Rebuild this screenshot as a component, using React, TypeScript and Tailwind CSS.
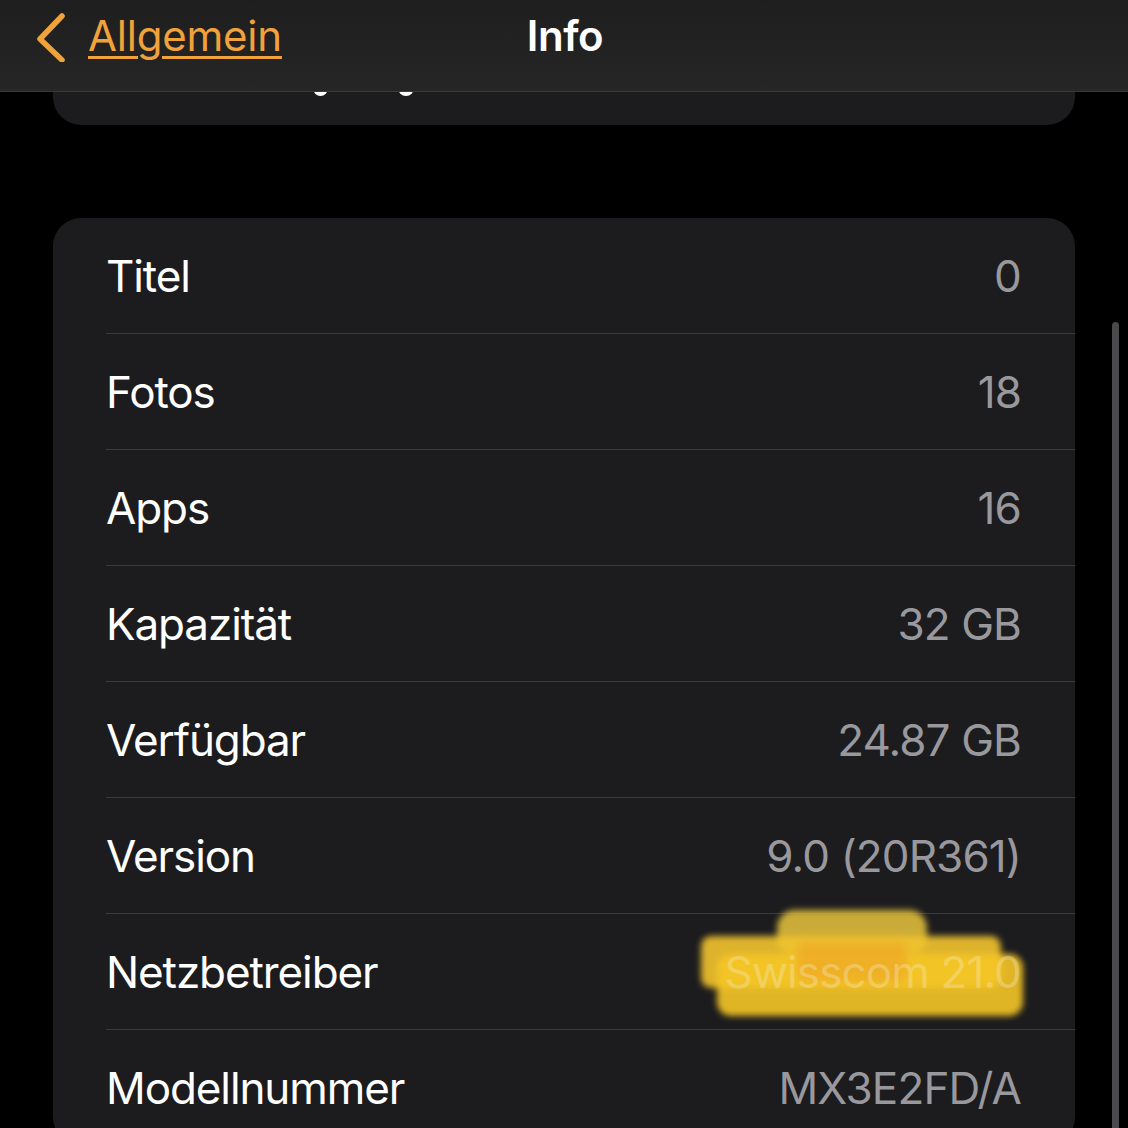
import React from 'react';

const rows: { label: string; value: string; hidden?: boolean }[] = [
  { label: 'Titel', value: '0' },
  { label: 'Fotos', value: '18' },
  { label: 'Apps', value: '16' },
  { label: 'Kapazität', value: '32 GB' },
  { label: 'Verfügbar', value: '24.87 GB' },
  { label: 'Version', value: '9.0 (20R361)' },
  { label: 'Netzbetreiber', value: 'Swisscom 21.0', hidden: true },
  { label: 'Modellnummer', value: 'MX3E2FD/A' },
];

const font = { fontFamily: 'Inter, "Noto Sans", sans-serif' };

// yellow marker scribble that hides the carrier name
const Scribble: React.FC = () => (
  <div className="pointer-events-none absolute right-[48px] top-[-4px] h-[110px] w-[326px]">
    <div className="absolute left-[76px] top-[0px] h-[46px] w-[150px] rounded-[18px] bg-[#e9c53c] opacity-85 blur-[3px]" />
    <div className="absolute left-[0px] top-[26px] h-[52px] w-[300px] rounded-[10px] bg-[#f2c42e] opacity-90 blur-[3px]" />
    <div className="absolute left-[16px] top-[44px] h-[62px] w-[306px] rounded-[14px] bg-[#f6c626] opacity-90 blur-[3px]" />
    <div className="absolute left-[96px] top-[32px] h-[40px] w-[110px] rounded-[8px] bg-[#eea826] opacity-70 blur-[4px]" />
  </div>
);

export default function App() {
  return (
    <div className="relative h-[1128px] w-[1128px] overflow-hidden bg-black" style={font}>
      <div className="px-[53px]">
        <div className="flex h-[125px] items-end rounded-b-[28px] bg-[#1c1c1e] pb-[29px]">
          <div className="ml-[260px] h-[8px] w-[15px] rounded-b-full bg-white" />
          <div className="ml-[70px] h-[8px] w-[16px] rounded-b-full bg-white" />
        </div>
        <div className="mt-[93px] overflow-hidden rounded-[28px] bg-[#1c1c1e]">
          {rows.map((r, i) => (
            <div key={r.label} className="pl-[53px]">
              <div
                className={`relative flex items-center justify-between pr-[54px] ${
                  i > 0 ? 'h-[116px] border-t border-[#3a3a3c]' : 'h-[115px]'
                }`}
              >
                <span className="text-[44px] tracking-[-0.025em] text-white">{r.label}</span>
                {r.hidden && <Scribble />}
                <span
                  className={`relative text-[44px] tracking-[-0.02em] ${
                    r.hidden ? 'text-[#f3ebc8]/35' : 'text-[#98989d]'
                  }`}
                >
                  {r.value}
                </span>
              </div>
            </div>
          ))}
        </div>
      </div>

      <div className="absolute right-[9px] top-[322px] h-[830px] w-[7px] rounded-full bg-[#4a4a4c]" />

      <div className="absolute left-0 right-0 top-0 flex h-[92px] items-start justify-between border-b border-[#3a3a3a] bg-gradient-to-b from-[#1e1e1e] to-[#262626] pl-[33px] pt-[4px]">
        <div className="flex items-center">
          <svg width="34" height="52" viewBox="0 0 34 52" fill="none">
            <path d="M29 6 L7 29 L29 50" stroke="#f2a23a" strokeWidth="5.5" strokeLinecap="round" strokeLinejoin="round" />
          </svg>
          <span className="ml-[21px] text-[42px] tracking-[-0.005em] text-[#f2a23a] underline decoration-[3px] underline-offset-[5px]">
            Allgemein
          </span>
        </div>
        <div className="flex-1 pr-[280px] text-center text-[42px] font-semibold tracking-[-0.01em] text-white">Info</div>
      </div>
    </div>
  );
}
